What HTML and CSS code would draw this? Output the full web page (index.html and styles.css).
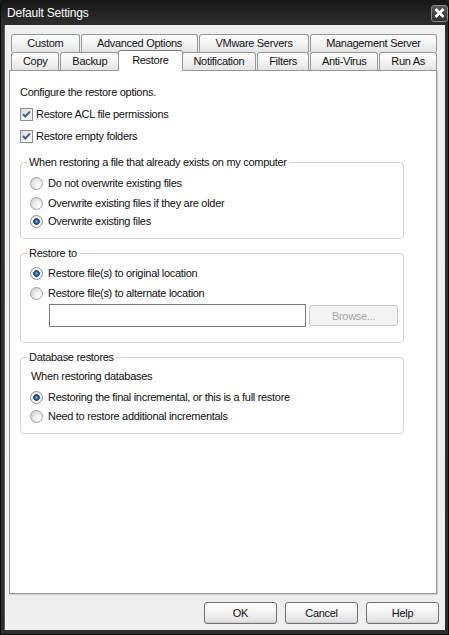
FILE: index.html
```html
<!DOCTYPE html>
<html lang="en-US">

<head>
    <title>Default Settings</title>
    <link rel="stylesheet" href="styles.css">
</head>

<body>
    <div class="window">
        <div class="titlebar">
            <span class="title">Default Settings</span>
            <span class="close">
                <svg width="11" height="10" viewBox="0 0 11 10">
                    <path d="M1.5 1 L9.5 9 M9.5 1 L1.5 9" stroke="#fff" stroke-width="2.6" />
                </svg>
            </span>
        </div>
        <div class="client">
            <div class="tabs">
                <div class="tab-row">
                    <div class="tab">Custom</div>
                    <div class="tab">Advanced Options</div>
                    <div class="tab">VMware Servers</div>
                    <div class="tab">Management Server</div>
                </div>
                <div class="tab-row">
                    <div class="tab">Copy</div>
                    <div class="tab">Backup</div>
                    <div class="tab active">Restore</div>
                    <div class="tab">Notification</div>
                    <div class="tab">Filters</div>
                    <div class="tab">Anti-Virus</div>
                    <div class="tab">Run As</div>
                </div>
            </div>
            <div class="page">
                <div class="intro">Configure the restore options.</div>
                <label class="check first">
                    <span class="box"><svg width="11" height="11" viewBox="0 0 11 11"><path d="M2 5 L4.3 7.5 L9 2.5" fill="none" stroke="#4a5f8c" stroke-width="2" /></svg></span>
                    Restore ACL file permissions
                </label>
                <label class="check">
                    <span class="box"><svg width="11" height="11" viewBox="0 0 11 11"><path d="M2 5 L4.3 7.5 L9 2.5" fill="none" stroke="#4a5f8c" stroke-width="2" /></svg></span>
                    Restore empty folders
                </label>

                <fieldset class="group overwrite">
                    <legend>When restoring a file that already exists on my computer</legend>
                    <label class="radio"><span class="dot"></span>Do not overwrite existing files</label>
                    <label class="radio spaced"><span class="dot"></span>Overwrite existing files if they are older</label>
                    <label class="radio"><span class="dot on"></span>Overwrite existing files</label>
                </fieldset>

                <fieldset class="group location">
                    <legend>Restore to</legend>
                    <label class="radio"><span class="dot on"></span>Restore file(s) to original location</label>
                    <label class="radio spaced"><span class="dot"></span>Restore file(s) to alternate location</label>
                    <div class="path-row">
                        <span class="path-input"></span>
                        <span class="btn disabled browse">Browse...</span>
                    </div>
                </fieldset>

                <fieldset class="group database">
                    <legend>Database restores</legend>
                    <div class="note">When restoring databases</div>
                    <label class="radio db-first"><span class="dot on"></span>Restoring the final incremental, or this is a full restore</label>
                    <label class="radio db-second"><span class="dot"></span>Need to restore additional incrementals</label>
                </fieldset>
            </div>
            <div class="buttons">
                <span class="btn">OK</span>
                <span class="btn">Cancel</span>
                <span class="btn">Help</span>
            </div>
        </div>
    </div>
</body>

</html>
```

FILE: styles.css
```css
html,
body {
    margin: 0;
    padding: 0;
}

body {
    width: 449px;
    height: 635px;
    overflow: hidden;
    background: #1e1e1e;
    font-family: "Liberation Sans", Arial, sans-serif;
    font-size: 11px;
    letter-spacing: -0.3px;
    color: #111;
}

.window {
    box-sizing: border-box;
    height: 635px;
    display: flex;
    flex-direction: column;
    padding: 0 4px 5px 4px;
    border-radius: 7px 7px 0 0;
    background: linear-gradient(#161616, #2c2c2c 22px, #333 40px, #2e2e2e);
    box-shadow: inset 1px 0 #0a0a0a, inset -1px 0 #0a0a0a, inset 0 -1px #0a0a0a;
}

.titlebar {
    height: 25px;
    display: flex;
    align-items: center;
    justify-content: space-between;
    padding: 1px 0 0 3px;
    box-sizing: border-box;
}

.title {
    color: #fff;
    font-size: 12px;
    letter-spacing: -0.2px;
}

.close {
    box-sizing: border-box;
    width: 17px;
    height: 17px;
    margin: 0 -3px 0 0;
    display: flex;
    align-items: center;
    justify-content: center;
    border: 1px solid #8a8a8a;
    border-radius: 3px;
    background: linear-gradient(#5a5a5a, #303030);
}

.client {
    flex: 1;
    display: flex;
    flex-direction: column;
    padding: 9px 8px 0 5px;
    background: #efefef;
    box-shadow: inset 1px 0 #5a5a5a;
}

/* tab strip */
.tabs {
    padding: 0 0 0 2px;
}

.tab-row {
    display: flex;
    gap: 1px;
    height: 18px;
    align-items: flex-start;
}

.tab {
    flex: 1 1 auto;
    box-sizing: border-box;
    height: 18px;
    padding: 0 6px;
    line-height: 17px;
    text-align: center;
    white-space: nowrap;
    border: 1px solid #919b9c;
    border-bottom: 0;
    border-radius: 3px 3px 0 0;
    background: linear-gradient(#ffffff, #f3f3f3 50%, #e4e4e4);
}

.tab.active {
    position: relative;
    z-index: 1;
    height: 21px;
    margin: -2px -2px -1px -2px;
    padding: 0 8px;
    line-height: 18px;
    background: #fff;
    border-top-color: #7a7a7a;
}

/* tab page */
.page {
    flex: 1;
    box-sizing: border-box;
    padding: 12px 10px 0 10px;
    background: #fff;
    border: 1px solid #919b9c;
    box-shadow: 1px 1px 0 #d0d0d0;
}

.intro {
    height: 18px;
    line-height: 18px;
}

.check,
.radio {
    display: flex;
    align-items: center;
    height: 18px;
    line-height: 18px;
    white-space: nowrap;
}

.check {
    margin-top: 4px;
}

.box {
    box-sizing: border-box;
    width: 13px;
    height: 13px;
    margin-right: 3px;
    display: flex;
    align-items: center;
    justify-content: center;
    border: 1px solid #8e8f8f;
    background: linear-gradient(135deg, #d9d9d9, #f4f4f4 60%, #ffffff);
}

.dot {
    box-sizing: border-box;
    width: 13px;
    height: 13px;
    margin-right: 5px;
    border-radius: 50%;
    border: 1px solid #a2a2a2;
    background: radial-gradient(circle at 70% 70%, #ffffff 0, #f2f2f2 30%, #d6d6d6 80%);
}

.dot.on {
    border-color: #8f8f8f;
    background: radial-gradient(circle at 50% 50%, #8fc0e8 0, #2d6aa5 1.5px, #1d4a78 3px, #e6e6e6 3.6px, #f4f4f4 5px);
}

/* group boxes */
.group {
    box-sizing: border-box;
    width: 384px;
    min-width: 0;
    margin: 0;
    padding: 5px 4px 8px 9px;
    border: 1px solid #d4d4cc;
    border-radius: 4px;
}

.group legend {
    padding: 0 2px;
    margin-left: -3px;
    height: 14px;
    line-height: 14px;
}

.overwrite {
    margin-top: 10px;
}

.radio.spaced {
    margin-top: 2px;
}

.location {
    margin-top: 7px;
    padding-top: 4px;
    padding-bottom: 15px;
}

.path-row {
    display: flex;
    align-items: center;
    margin-top: 2px;
    padding-left: 19px;
}

.path-input {
    flex-shrink: 0;
    box-sizing: border-box;
    width: 257px;
    height: 23px;
    border: 1px solid #7b7b7b;
    background: #fff;
}

.database {
    margin-top: 7px;
    padding-top: 3px;
}

.note {
    height: 18px;
    line-height: 18px;
    padding-left: 1px;
}

.db-first {
    margin-top: 3px;
}

.db-second {
    margin-top: 1px;
}

/* push buttons */
.btn {
    flex-shrink: 0;
    box-sizing: border-box;
    width: 73px;
    height: 22px;
    display: flex;
    align-items: center;
    justify-content: center;
    border: 1px solid #707070;
    border-radius: 3px;
    background: linear-gradient(#ffffff, #f2f2f2 50%, #dedede);
    box-shadow: inset 0 -1px #d0d0d0;
}

.btn.disabled {
    color: #a8a8a8;
    border-color: #c8c8c8;
    background: #f4f4f4;
    box-shadow: none;
}

.browse {
    width: 89px;
    height: 21px;
    margin-left: 3px;
}

.buttons {
    display: flex;
    justify-content: flex-end;
    gap: 8px;
    height: 36px;
    box-sizing: border-box;
    padding: 8px 0 6px 0;
    margin-right: -2px;
}
```
